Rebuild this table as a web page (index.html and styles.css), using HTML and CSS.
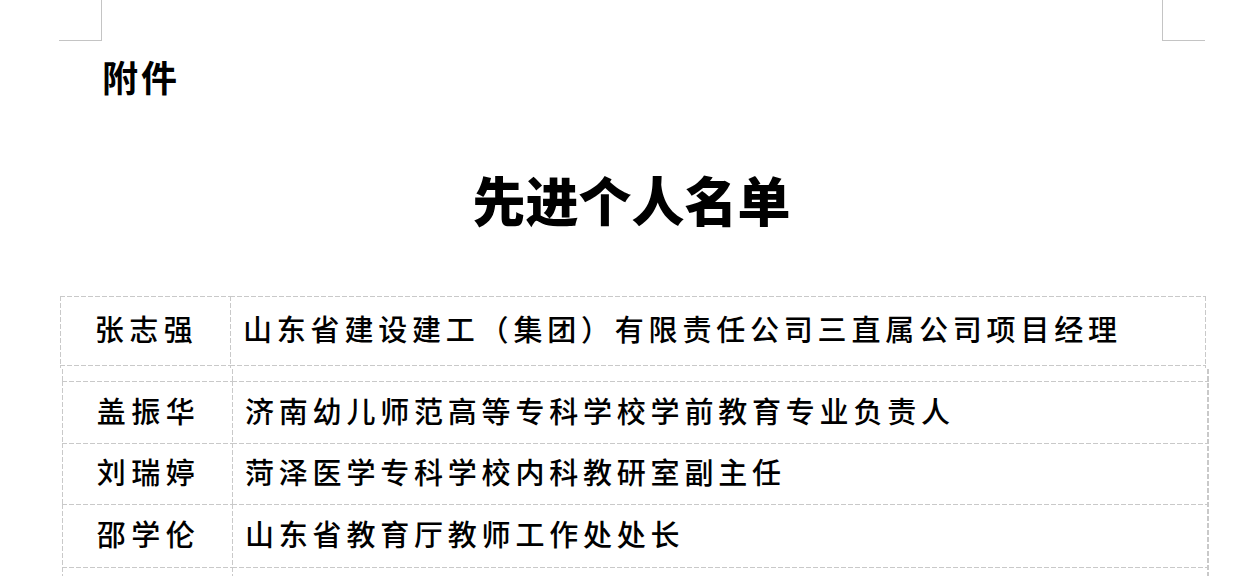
FILE: index.html
```html
<!DOCTYPE html>
<html lang="zh-CN">
<head>
<meta charset="utf-8">
<title>先进个人名单</title>
<link rel="stylesheet" href="styles.css">
</head>
<body>
<div class="page">
  <div class="corners">
    <div class="corner corner-l"></div>
    <div class="corner corner-r"></div>
  </div>
  <div class="attach">附件</div>
  <h1 class="title">先进个人名单</h1>

  <div class="tbl tbl1">
    <div class="cell name">张志强</div>
    <div class="cell desc">山东省建设建工（集团）有限责任公司三直属公司项目经理</div>
    <div class="cell tail"></div>
    <div class="cell tail"></div>
  </div>

  <div class="tbl tbl2">
    <div class="cell stub"></div>
    <div class="cell stub"></div>
    <div class="cell name">盖振华</div>
    <div class="cell desc">济南幼儿师范高等专科学校学前教育专业负责人</div>
    <div class="cell name">刘瑞婷</div>
    <div class="cell desc">菏泽医学专科学校内科教研室副主任</div>
    <div class="cell name">邵学伦</div>
    <div class="cell desc">山东省教育厅教师工作处处长</div>
    <div class="cell name"></div>
    <div class="cell desc"></div>
  </div>
</div>
</body>
</html>
```

FILE: styles.css
```css
:root {
  --line: #c9c9c9;
  --dash-h: repeating-linear-gradient(90deg, var(--line) 0 5px, transparent 5px 7px);
  --dash-v: repeating-linear-gradient(180deg, var(--line) 0 5px, transparent 5px 7px);
}

html, body {
  margin: 0;
  padding: 0;
  background: #ffffff;
}

body {
  width: 1248px;
  height: 576px;
  overflow: hidden;
  font-family: "Noto Sans CJK SC", "Noto Sans", sans-serif;
  color: #000;
}

.page {
  display: flex;
  flex-direction: column;
}

.corners {
  display: flex;
  justify-content: space-between;
  height: 41px;
}

.corner {
  box-sizing: border-box;
  width: 43px;
  height: 41px;
  border-bottom: 1px solid #c4c4c4;
}

.corner-l {
  margin-left: 59px;
  border-right: 1px solid #c4c4c4;
}

.corner-r {
  margin-right: 43px;
  border-left: 1px solid #c4c4c4;
}

.attach {
  margin: 17px 0 0 102px;
  font-size: 36px;
  line-height: 36px;
  font-weight: 700;
  letter-spacing: 3px;
}

.title {
  margin: 79px 0 0 101px;
  width: 1061px;
  text-align: center;
  font-size: 53px;
  line-height: 53px;
  font-weight: 900;
}

.tbl {
  display: grid;
  box-sizing: border-box;
}

.tbl1 {
  margin: 70px 0 0 60px;
  width: 1146px;
  grid-template-columns: 170px 1fr;
  grid-template-rows: 69px 3px;
  background: var(--dash-v) right top / 1px 100% no-repeat;
}

.tbl2 {
  margin: 1px 0 0 62px;
  width: 1147px;
  grid-template-columns: 170px 1fr;
  grid-template-rows: 12px 62px 61px 63px 62px;
  background: var(--dash-v) right top / 2px 100% no-repeat;
}

.cell {
  display: flex;
  align-items: center;
  box-sizing: border-box;
  padding-bottom: 5px;
  font-size: 29px;
  line-height: 30px;
  font-weight: 500;
  letter-spacing: 4.8px;
  background:
    var(--dash-h) left top / 100% 1px no-repeat,
    var(--dash-v) left top / 1px 100% no-repeat;
}

.name {
  justify-content: center;
  padding-left: 3px;
  letter-spacing: 5.5px;
}

.desc {
  padding-left: 13px;
}

.stub,
.tail {
  padding: 0;
}

.stub {
  background: var(--dash-v) left top / 1px 100% no-repeat;
}
```
